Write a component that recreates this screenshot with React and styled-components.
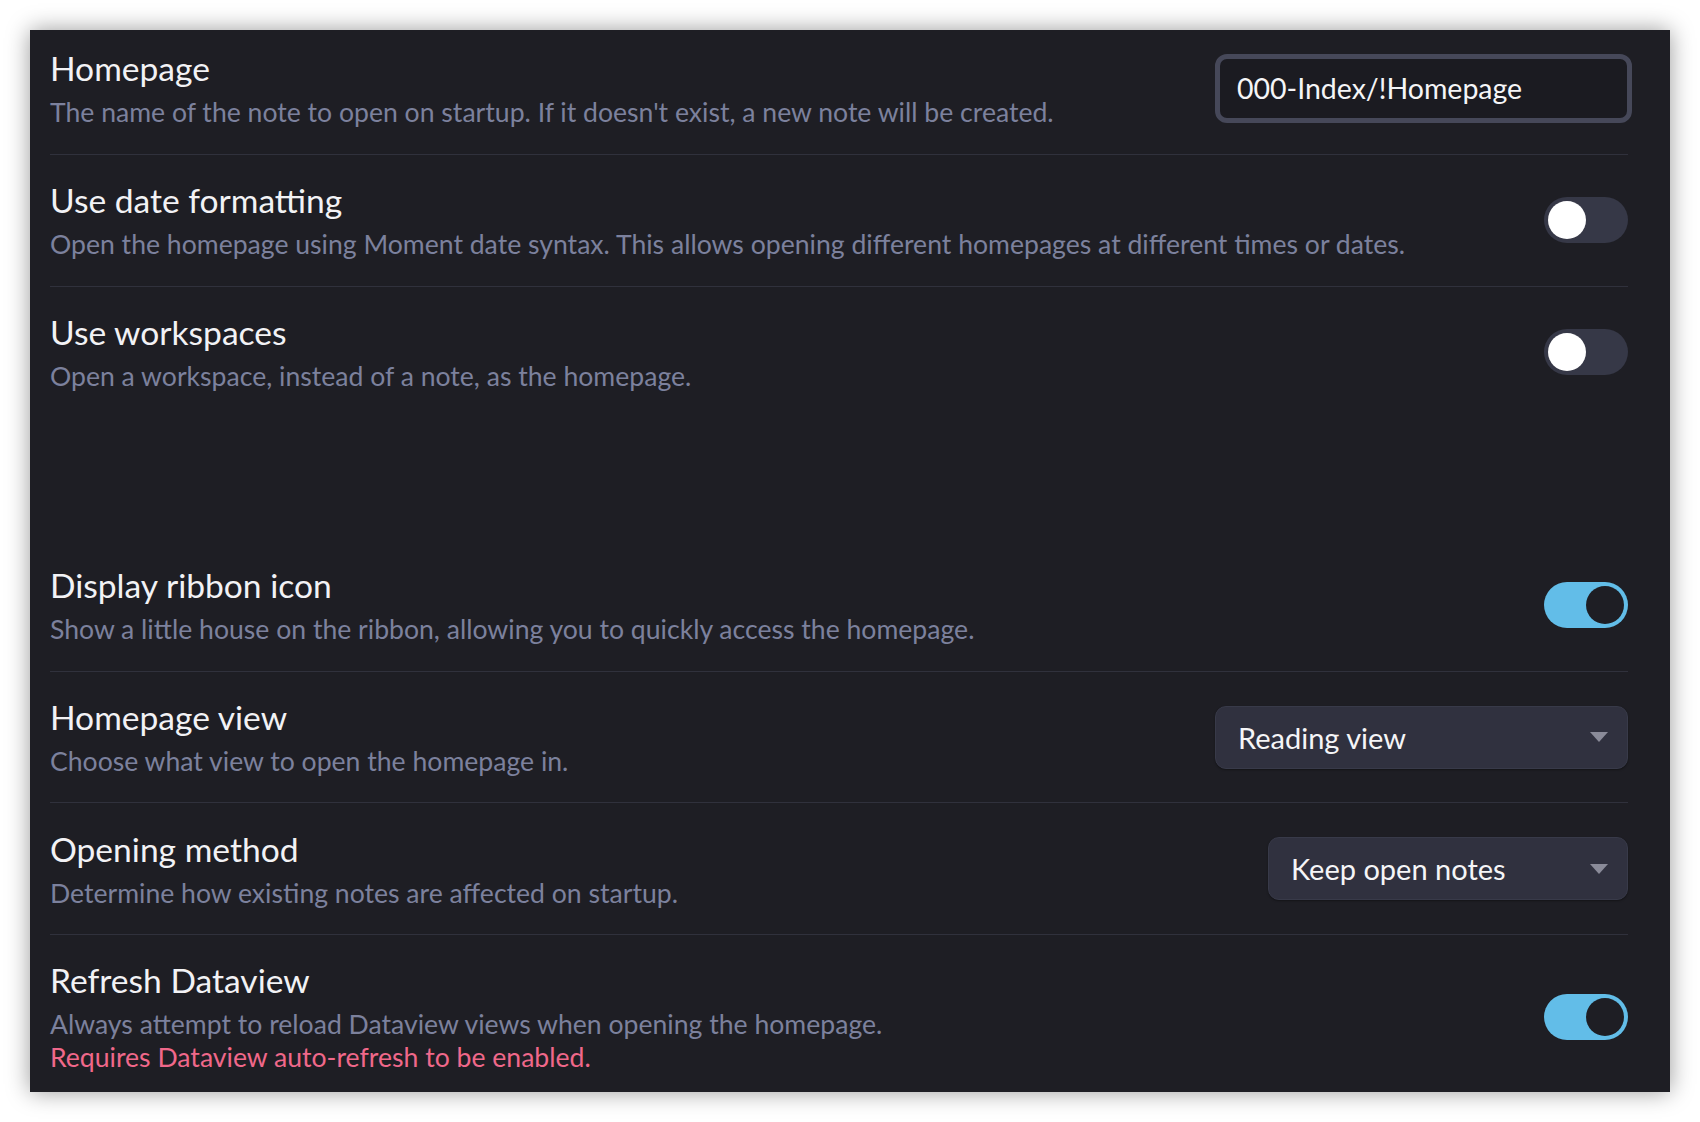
import React from "react";
import styled, { createGlobalStyle } from "styled-components";

const GlobalStyle = createGlobalStyle`
  body {
    margin: 0;
    background: #ffffff;
    font-family: Lato, "Liberation Sans", sans-serif;
  }
`;

const Page = styled.div`
  padding: 30px;
`;

const Panel = styled.div`
  background: #1e1e24;
  height: 1062px;
  box-sizing: border-box;
  padding: 0 42px 0 20px;
  box-shadow: 0 0 22px rgba(0, 0, 0, 0.4);
  overflow: hidden;
`;

const Row = styled.div`
  display: flex;
  align-items: center;
  justify-content: space-between;
  gap: 24px;
  padding: ${(p) => (p.first ? "17px 0 25px" : "24.3px 0")};
  border-bottom: ${(p) => (p.last ? "none" : "1px solid #30313c")};
`;

const Info = styled.div`
  display: flex;
  flex-direction: column;
  gap: 7px;
`;

const Name = styled.div`
  color: #f2f2f5;
  font-size: 33.6px;
  line-height: 42px;
`;

const Desc = styled.div`
  color: #7c819d;
  font-size: 26.6px;
  line-height: 33px;
`;

const Warning = styled.div`
  color: #f0688a;
  font-size: 26.6px;
  line-height: 33px;
`;

const Spacer = styled.div`
  height: 123px;
`;

const TextInput = styled.input`
  width: 417px;
  height: 69px;
  box-sizing: border-box;
  margin-right: -4px;
  background: #1b1b21;
  border: 5px solid #464859;
  border-radius: 12px;
  color: #f5f5f7;
  font-family: Lato, "Liberation Sans", sans-serif;
  font-size: 28.5px;
  padding: 0 17px;
  outline: none;
`;

const Track = styled.div`
  width: 84px;
  height: 46px;
  flex-shrink: 0;
  box-sizing: border-box;
  border-radius: 23px;
  padding: 4px;
  display: flex;
  justify-content: ${(p) => (p.on ? "flex-end" : "flex-start")};
  background: ${(p) => (p.on ? "#62bde8" : "#363847")};
`;

const Knob = styled.div`
  width: 38px;
  height: 38px;
  border-radius: 50%;
  background: ${(p) => (p.on ? "#1e1e24" : "#ffffff")};
`;

const Select = styled.div`
  width: ${(p) => p.width}px;
  height: 63px;
  flex-shrink: 0;
  box-sizing: border-box;
  display: flex;
  align-items: center;
  justify-content: space-between;
  padding: 0 19px 0 22px;
  background: #30313f;
  border: 1px solid #383a49;
  border-radius: 11px;
  box-shadow: 0 1px 2px rgba(0, 0, 0, 0.35);
  color: #f5f5f7;
  font-size: 29px;
`;

const Toggle = ({ on }) => (
  <Track on={on ? 1 : 0}>
    <Knob on={on ? 1 : 0} />
  </Track>
);

const Caret = () => (
  <svg width="18" height="10" viewBox="0 0 18 10">
    <path d="M0 0 H18 L9 10 Z" fill="#8a8b99" />
  </svg>
);

const App = () => {
  return (
    <Page>
      <GlobalStyle />
      <Panel>
        <Row first>
          <Info>
            <Name>Homepage</Name>
            <Desc>
              The name of the note to open on startup. If it doesn't exist, a
              new note will be created.
            </Desc>
          </Info>
          <TextInput defaultValue="000-Index/!Homepage" />
        </Row>
        <Row>
          <Info>
            <Name>Use date formatting</Name>
            <Desc>
              Open the homepage using Moment date syntax. This allows opening
              different homepages at different times or dates.
            </Desc>
          </Info>
          <Toggle />
        </Row>
        <Row last>
          <Info>
            <Name>Use workspaces</Name>
            <Desc>Open a workspace, instead of a note, as the homepage.</Desc>
          </Info>
          <Toggle />
        </Row>
        <Spacer />
        <Row>
          <Info>
            <Name>Display ribbon icon</Name>
            <Desc>
              Show a little house on the ribbon, allowing you to quickly access
              the homepage.
            </Desc>
          </Info>
          <Toggle on />
        </Row>
        <Row>
          <Info>
            <Name>Homepage view</Name>
            <Desc>Choose what view to open the homepage in.</Desc>
          </Info>
          <Select width={413}>
            <span>Reading view</span>
            <Caret />
          </Select>
        </Row>
        <Row>
          <Info>
            <Name>Opening method</Name>
            <Desc>Determine how existing notes are affected on startup.</Desc>
          </Info>
          <Select width={360}>
            <span>Keep open notes</span>
            <Caret />
          </Select>
        </Row>
        <Row last>
          <Info>
            <Name>Refresh Dataview</Name>
            <Desc>
              Always attempt to reload Dataview views when opening the homepage.
              <Warning>Requires Dataview auto-refresh to be enabled.</Warning>
            </Desc>
          </Info>
          <Toggle on />
        </Row>
      </Panel>
    </Page>
  );
};

export default App;
